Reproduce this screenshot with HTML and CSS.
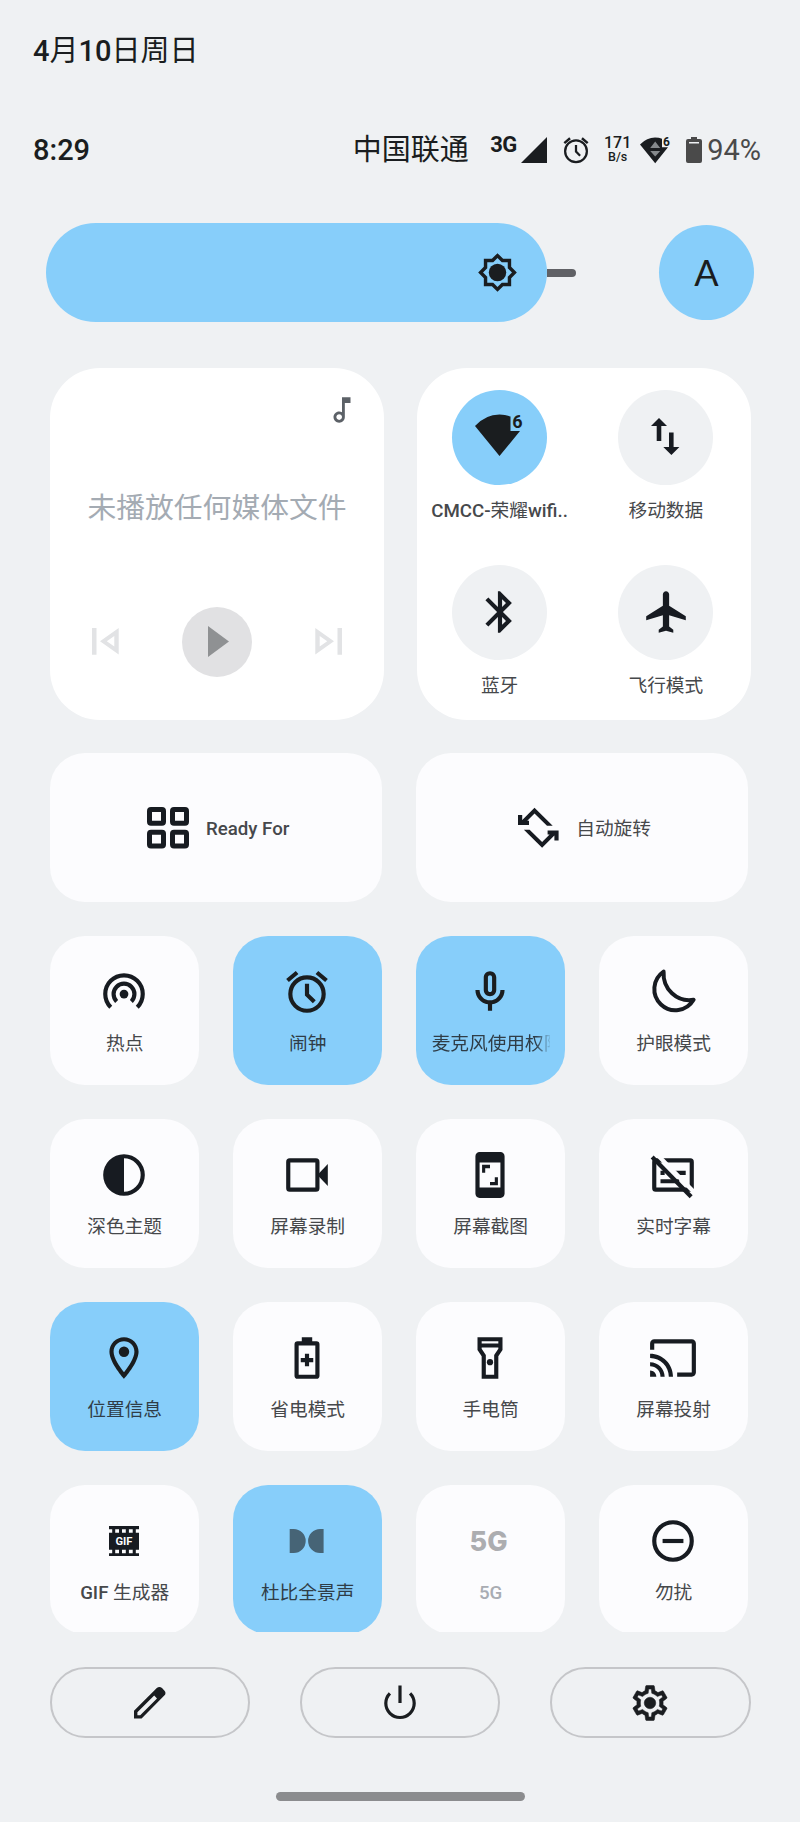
FILE: index.html
```html
<!DOCTYPE html>
<html lang="zh-CN">
<head>
<meta charset="utf-8">
<title>快捷设置</title>
<link rel="stylesheet" href="styles.css">
</head>
<body>
<main class="shade">
  <div class="date"><b>4</b>月<b>10</b>日周日</div>

  <header class="status">
    <span class="clock">8:29</span>
    <div class="status-right">
      <span class="carrier">中国联通</span>
      <span class="network">3G</span>
      <svg class="signal" width="26" height="26" viewBox="0 0 26 26"><path d="M26 0v26H0z"/></svg>
      <svg class="status-alarm" width="30" height="30" viewBox="0 0 24 24"><path d="M22 5.72l-4.6-3.86-1.29 1.53 4.6 3.86zM7.88 3.39L6.6 1.86 2 5.71l1.29 1.53z"/><circle cx="12" cy="13" r="8.7" fill="none" stroke="currentColor" stroke-width="1.8"/><path d="M12 8v5.3l3.3 3.3" fill="none" stroke="currentColor" stroke-width="1.8"/></svg>
      <span class="speed"><b>171</b><i>B/s</i></span>
      <svg class="status-wifi" width="32" height="27" viewBox="0 0 32 27"><path d="M0 7.5Q7 .6 15 .6q4 0 7 1.2v8.400h6L15.200 26.300z"/><path class="wifi-arrow" d="M15.200 4.600l5 6.400h-10zM15.200 19.600l-5-5.600h10z"/><text x="23" y="9" font-size="12">6</text></svg>
      <svg class="battery" width="16" height="26" viewBox="0 0 16 26"><path fill-rule="evenodd" d="M5 0h6v2h3q2 0 2 2v20q0 2-2 2H2q-2 0-2-2V4q0-2 2-2h3zM3 5v1.500h10V5z"/></svg>
      <span class="percent">94%</span>
    </div>
  </header>

  <section class="brightness">
    <div class="slider">
      <div class="slider-fill">
        <svg width="41" height="41" viewBox="0 0 24 24"><path fill-rule="evenodd" d="M20 8.690V4h-4.690L12 .69 8.690 4H4v4.690L.69 12 4 15.310V20h4.690L12 23.310 15.310 20H20v-4.690L23.310 12 20 8.690zm-2 5.790V18h-3.520L12 20.480 9.520 18H6v-3.520L3.520 12 6 9.520V6h3.520L12 3.520 14.480 6H18v3.520L20.480 12 18 14.480z"/><circle cx="12" cy="12" r="5.100"/></svg>
      </div>
      <div class="slider-track"></div>
    </div>
    <div class="auto">A</div>
  </section>

  <section class="cards">
    <div class="card media">
      <svg class="note" width="34" height="34" viewBox="0 0 24 24"><path d="M12 3l.01 10.550c-.59-.34-1.270-.55-2-.55C7.790 13 6 14.790 6 17s1.790 4 4.010 4S14 19.210 14 17V7h4V3h-6zm-1.990 16c-1.100 0-2-.9-2-2s.9-2 2-2 2 .9 2 2-.9 2-2 2z"/></svg>
      <div class="media-title">未播放任何媒体文件</div>
      <div class="controls">
        <svg width="27" height="27" viewBox="0 0 27 27"><path fill-rule="evenodd" d="M0 0h4.500v26.700H0zM8 13.300L26.700 0v26.600zM14.800 13.300l7.500 5.200V8.100z"/></svg>
        <div class="play"><svg width="21" height="31" viewBox="0 0 21 31"><path d="M0 0l21 15.500L0 31z"/></svg></div>
        <svg width="27" height="27" viewBox="0 0 27 27"><path fill-rule="evenodd" d="M22.500 0H27v26.700h-4.500zM19 13.300L.3 0v26.600zM12.200 13.300l-7.500 5.200V8.100z"/></svg>
      </div>
    </div>
    <div class="card links">
      <div class="link">
        <span class="disc on"><svg width="50" height="50" viewBox="0 0 50 50"><path d="M0 14Q10.500 2.500 24.500 2.500q6 0 11 2V19H45L24.500 44z"/><text x="37.300" y="16" font-size="18">6</text></svg></span>
        <span class="label"><b>CMCC-</b>荣耀<b>wifi..</b></span>
      </div>
      <div class="link">
        <span class="disc"><svg width="50" height="50" viewBox="0 0 50 50"><path d="M18 6l8 8h-5.700v15h-4.600V14H10zM30.400 43l8-8h-5.800V20.500H28V35h-5.700z"/></svg></span>
        <span class="label">移动数据</span>
      </div>
      <div class="link">
        <span class="disc"><svg width="50" height="50" viewBox="0 0 24 24"><path d="M17.710 7.710L12 2h-1v7.590L6.410 5 5 6.410 10.590 12 5 17.590 6.410 19 11 14.410V22h1l5.710-5.710-4.300-4.290 4.300-4.290zM13 5.830l1.880 1.880L13 9.590V5.830zm1.880 10.460L13 18.170v-3.760l1.880 1.880z"/></svg></span>
        <span class="label">蓝牙</span>
      </div>
      <div class="link">
        <span class="disc"><svg width="50" height="50" viewBox="0 0 24 24"><path d="M21.500 16v-2l-8-5V3.500c0-.83-.67-1.500-1.500-1.500s-1.500.67-1.500 1.500V9l-8 5v2l8-2.500V19l-2 1.500V22l3.500-1 3.500 1v-1.500l-2-1.500v-5.500z"/></svg></span>
        <span class="label">飞行模式</span>
      </div>
    </div>
  </section>

  <section class="tiles">
    <div class="tile wide">
      <svg class="icon" viewBox="0 0 50 50"><g fill="none" stroke="currentColor" stroke-width="5"><rect x="6.500" y="6.500" width="14" height="13.700" rx="1.500"/><rect x="29.500" y="6.500" width="14" height="13.700" rx="1.500"/><rect x="6.500" y="29.200" width="14" height="13.700" rx="1.500"/><rect x="29.500" y="29.200" width="14" height="13.700" rx="1.500"/></g></svg>
      <span class="label"><b>Ready For</b></span>
    </div>
    <div class="tile wide">
      <svg class="icon" viewBox="0 0 50 50"><path d="M21.500 4.700l18.200 18H34L21.500 10.400 10 22l-3-2.800zM5 12h4.200v5.800H16V22H5z"/><g transform="rotate(180 25.300 24.700)"><path d="M21.500 4.700l18.200 18H34L21.500 10.400 10 22l-3-2.800zM5 12h4.200v5.800H16V22H5z"/></g></svg>
      <span class="label">自动旋转</span>
    </div>

    <div class="tile">
      <svg class="icon" viewBox="0 0 24 24"><circle cx="12" cy="13" r="2.100"/><g fill="none" stroke="currentColor" stroke-width="2"><path d="M8.460 16.540a5 5 0 1 1 7.080 0"/><path d="M5.640 19.360a9 9 0 1 1 12.720 0"/></g></svg>
      <span class="label">热点</span>
    </div>
    <div class="tile on">
      <svg class="icon" viewBox="0 0 24 24"><path d="M22 5.720l-4.600-3.860-1.290 1.530 4.600 3.860zM7.880 3.390L6.600 1.860 2 5.710l1.290 1.530z"/><circle cx="12" cy="13" r="8" fill="none" stroke="currentColor" stroke-width="2"/><path d="M12 8v5.300l3.500 3.400" fill="none" stroke="currentColor" stroke-width="2"/></svg>
      <span class="label">闹钟</span>
    </div>
    <div class="tile on">
      <svg class="icon" viewBox="0 0 24 24"><path d="M12 14c1.660 0 3-1.340 3-3V5c0-1.660-1.340-3-3-3S9 3.340 9 5v6c0 1.660 1.340 3 3 3zm-1-9c0-.55.45-1 1-1s1 .45 1 1v6c0 .55-.45 1-1 1s-1-.45-1-1V5zm6 6c0 2.760-2.240 5-5 5s-5-2.240-5-5H5c0 3.530 2.610 6.430 6 6.920V21h2v-3.080c3.390-.49 6-3.390 6-6.920h-2z"/></svg>
      <span class="label fade">麦克风使用权限</span>
    </div>
    <div class="tile">
      <svg class="icon" viewBox="0 0 50 50"><path d="M15.600 4.600A21.100 21.100 0 1 0 45.600 32.800C29 35.500 14.500 22 15.600 4.600z" fill="none" stroke="currentColor" stroke-width="4" stroke-linejoin="round"/></svg>
      <span class="label">护眼模式</span>
    </div>

    <div class="tile">
      <svg class="icon" viewBox="0 0 24 24"><path fill-rule="evenodd" d="M12 2a10 10 0 1 0 0 20 10 10 0 0 0 0-20zm0 2a8 8 0 0 1 0 16z"/></svg>
      <span class="label">深色主题</span>
    </div>
    <div class="tile">
      <svg class="icon" viewBox="0 0 24 24"><rect x="3" y="5" width="14" height="14" rx=".7" fill="none" stroke="currentColor" stroke-width="2"/><path d="M22 6.700v10.600L17 12z"/></svg>
      <span class="label">屏幕录制</span>
    </div>
    <div class="tile">
      <svg class="icon" viewBox="0 0 24 24"><path fill-rule="evenodd" d="M7 1h10c1.100 0 2 .9 2 2v18c0 1.100-.9 2-2 2H7c-1.100 0-2-.9-2-2V3c0-1.100.9-2 2-2zM7 6v12h10V6z"/><path d="M9.700 8.700H12V7.100H8.200v3.800h1.500zM12 16.900h3.800v-3.800h-1.500v2.300H12z"/></svg>
      <span class="label">屏幕截图</span>
    </div>
    <div class="tile">
      <svg class="icon" viewBox="0 0 24 24"><rect x="3" y="5" width="18" height="14" rx=".7" fill="none" stroke="currentColor" stroke-width="2"/><path d="M6 10h2v2H6zM12.500 10h5.600v2h-5.600zM6 14h9v2H6z"/><path class="gap" d="M3.400 1.200l19.600 19.900"/><path d="M2 3.400l18.700 19" fill="none" stroke="currentColor" stroke-width="2"/></svg>
      <span class="label">实时字幕</span>
    </div>

    <div class="tile on">
      <svg class="icon" viewBox="0 0 24 24"><path d="M12 2C8.130 2 5 5.130 5 9c0 5.250 7 13 7 13s7-7.750 7-13c0-3.870-3.130-7-7-7zM7 9c0-2.760 2.240-5 5-5s5 2.240 5 5c0 2.880-2.880 7.190-5 9.880C9.920 16.210 7 11.850 7 9z"/><circle cx="12" cy="9" r="2.500"/></svg>
      <span class="label">位置信息</span>
    </div>
    <div class="tile">
      <svg class="icon" viewBox="0 0 24 24"><rect x="7" y="5" width="10" height="16" rx=".5" fill="none" stroke="currentColor" stroke-width="2"/><path d="M9.500 2h5v3h-5zM11 10h2v2h2v2h-2v2h-2v-2H9v-2h2z"/></svg>
      <span class="label">省电模式</span>
    </div>
    <div class="tile">
      <svg class="icon" viewBox="0 0 24 24"><path fill-rule="evenodd" d="M6 2h12v6.200l-2 3V22H8V11.200l-2-3zM8 4v1h8V4zM8 7v.5l2 3V20h4v-9.500l2-3V7z"/><circle cx="12" cy="14" r="1.500"/></svg>
      <span class="label">手电筒</span>
    </div>
    <div class="tile">
      <svg class="icon" viewBox="0 0 24 24"><path d="M21 3H3c-1.100 0-2 .9-2 2v3h2V5h18v14h-7v2h7c1.100 0 2-.9 2-2V5c0-1.100-.9-2-2-2zM1 18v3h3c0-1.660-1.340-3-3-3zm0-4v2c2.760 0 5 2.240 5 5h2c0-3.870-3.130-7-7-7zm0-4v2c4.970 0 9 4.030 9 9h2c0-6.080-4.930-11-11-11z"/></svg>
      <span class="label">屏幕投射</span>
    </div>

    <div class="tile">
      <svg class="icon" viewBox="0 0 50 50"><path fill-rule="evenodd" d="M10 10h30v3.300h-3.200v3.500H40v17h-3.200v3.400H40V40H10v-2.800h3.200v-3.400H10v-17h3.200v-3.500H10zM16.200 13.300v3.500h3.800v-3.500zM23 13.300v3.500h3.800v-3.500zM29.900 13.300v3.500h3.800v-3.500zM16.200 33.800v3.400h3.800v-3.400zM23 33.800v3.400h3.800v-3.400zM29.900 33.800v3.400h3.800v-3.400z"/><text class="gif" x="25" y="29.300" text-anchor="middle" textLength="17" lengthAdjust="spacingAndGlyphs">GIF</text></svg>
      <span class="label"><b>GIF</b> 生成器</span>
    </div>
    <div class="tile on">
      <svg class="icon dolby" viewBox="0 0 50 50"><path d="M7.700 13h4a12 12 0 0 1 0 24h-4zM41.600 13h-3.500a12 12 0 0 0 0 24h3.500z"/></svg>
      <span class="label">杜比全景声</span>
    </div>
    <div class="tile off">
      <svg class="icon" viewBox="0 0 50 50"><text class="fiveg" x="4.500" y="35" textLength="38" lengthAdjust="spacingAndGlyphs">5G</text></svg>
      <span class="label"><b>5G</b></span>
    </div>
    <div class="tile">
      <svg class="icon" viewBox="0 0 24 24"><circle cx="12" cy="12" r="9" fill="none" stroke="currentColor" stroke-width="2"/><path d="M7 11h10v2H7z"/></svg>
      <span class="label">勿扰</span>
    </div>
  </section>

  <footer class="actions">
    <div class="pill"><svg width="32" height="32" viewBox="0 0 32 32"><path fill-rule="evenodd" d="M0 31.500v-7.700L22.800 1.100q2.600-2.200 5.200 0l2.300 2.300q2.400 2.600 0 5.200L7.600 31.500zM3.400 28.200h2.800L23 11.400l-2.800-2.900L3.400 25.300z"/></svg></div>
    <div class="pill"><svg width="36" height="36" viewBox="0 0 36 36"><path d="M7.900 8.300a14.200 14.200 0 1 0 20.200 0M18 .5V18" fill="none" stroke="currentColor" stroke-width="3.200"/></svg></div>
    <div class="pill"><svg class="gear" width="42" height="42" viewBox="0 0 24 24"><path d="M19.430 12.980c.04-.32.07-.64.07-.98 0-.34-.03-.66-.07-.98l2.110-1.650c.19-.15.24-.42.12-.64l-2-3.460c-.09-.16-.26-.25-.44-.25-.06 0-.12.01-.17.03l-2.490 1c-.52-.4-1.080-.73-1.690-.98l-.38-2.650C14.460 2.180 14.250 2 14 2h-4c-.25 0-.46.18-.49.42l-.38 2.650c-.61.25-1.170.59-1.690.98l-2.490-1c-.06-.02-.12-.03-.18-.03-.17 0-.34.09-.43.25l-2 3.460c-.13.22-.07.49.12.64l2.110 1.650c-.04.32-.07.65-.07.98 0 .33.03.66.07.98l-2.110 1.650c-.19.15-.24.42-.12.64l2 3.460c.09.16.26.25.44.25.06 0 .12-.01.17-.03l2.490-1c.52.4 1.080.73 1.690.98l.38 2.650c.03.24.24.42.49.42h4c.25 0 .46-.18.49-.42l.38-2.650c.61-.25 1.170-.59 1.690-.98l2.490 1c.06.02.12.03.18.03.17 0 .34-.09.43-.25l2-3.460c.12-.22.07-.49-.12-.64l-2.110-1.650zm-1.980-1.710c.04.31.05.52.05.73 0 .21-.02.43-.05.73l-.14 1.130.89.7 1.080.84-.7 1.210-1.270-.51-1.040-.42-.9.68c-.43.32-.84.56-1.250.73l-1.060.43-.16 1.130-.2 1.350h-1.400l-.19-1.350-.16-1.130-1.060-.43c-.43-.18-.83-.41-1.230-.71l-.91-.7-1.060.43-1.270.51-.7-1.210 1.080-.84.89-.7-.14-1.130c-.03-.31-.05-.54-.05-.74s.02-.43.05-.73l.14-1.130-.89-.7-1.080-.84.7-1.210 1.270.51 1.040.42.9-.68c.43-.32.84-.56 1.250-.73l1.060-.43.16-1.130.2-1.350h1.390l.19 1.350.16 1.130 1.060.43c.43.18.83.41 1.230.71l.91.7 1.060-.43 1.270-.51.7 1.210-1.070.85-.89.7.14 1.130z"/><circle cx="12" cy="12" r="3.300"/></svg></div>
  </footer>
  <div class="home-bar"></div>
</main>
</body>
</html>
```

FILE: styles.css
```css
* { box-sizing: border-box; }

body {
  margin: 0;
  background: #eff1f3;
  color: #1a1d20;
  font-family: Roboto, "Noto Sans CJK SC", sans-serif;
  font-weight: 400;
}

b { font-weight: 500; }

svg {
  display: block;
  flex: none;
  fill: currentColor;
  overflow: visible;
}

svg text {
  font-family: Roboto, sans-serif;
  font-weight: 700;
}

.shade {
  width: 800px;
  height: 1822px;
  display: flex;
  flex-direction: column;
  overflow: hidden;
}

.date {
  margin: 31px 0 0 33px;
  height: 40px;
  font-size: 29px;
  line-height: 40px;
}

.status {
  margin: 59px 39px 0 33px;
  height: 40px;
  display: flex;
  align-items: center;
  justify-content: space-between;
  font-size: 29px;
  line-height: 40px;
}

.clock { font-weight: 500; }

.status-right {
  display: flex;
  align-items: center;
}

.carrier { margin-right: 21.5px; }

.network {
  width: 31px;
  font-size: 22px;
  font-weight: 700;
  line-height: 26px;
  padding-bottom: 10px;
  letter-spacing: -0.5px;
}

.status-alarm { margin: 0 14px; }

.speed {
  width: 25px;
  display: flex;
  flex-direction: column;
  align-items: center;
  font-weight: 500;
  line-height: 14px;
}

.speed b { font-size: 16px; }
.speed i { font-size: 12.5px; font-style: normal; }

.status-wifi { margin-left: 10px; }
.wifi-arrow { fill: #85898c; }

.battery {
  margin-left: 14px;
  color: #4a4a4a;
}

.percent {
  margin-left: 5px;
  color: #4a4a4a;
}

.brightness {
  margin: 53px 46px 0;
  height: 99px;
  display: flex;
  align-items: center;
  justify-content: space-between;
}

.slider {
  display: flex;
  align-items: center;
}

.slider-fill {
  width: 501px;
  height: 99px;
  padding-right: 29px;
  border-radius: 50px;
  background: #87cefa;
  display: flex;
  align-items: center;
  justify-content: flex-end;
}

.slider-track {
  width: 29px;
  height: 8px;
  border-radius: 0 4px 4px 0;
  background: #606165;
}

.auto {
  width: 95px;
  height: 95px;
  border-radius: 50%;
  background: #87cefa;
  font: 400 36px/95px Lato, sans-serif;
  text-align: center;
}

.cards {
  margin: 46px 49.5px 0 50px;
  height: 352px;
  display: flex;
  justify-content: space-between;
}

.card {
  width: 334px;
  height: 352px;
  border-radius: 50px;
  background: #fff;
}

.media {
  display: flex;
  flex-direction: column;
  align-items: center;
}

.note {
  align-self: flex-end;
  margin: 24.5px 25px 0 0;
  color: #5c6167;
}

.media-title {
  margin-top: 61px;
  color: #a4abb3;
  font-size: 28.8px;
  line-height: 40px;
}

.controls {
  width: 250px;
  margin-top: 79px;
  display: flex;
  align-items: center;
  justify-content: space-between;
  color: #e2e3e5;
}

.play {
  width: 70px;
  height: 70px;
  padding-left: 3px;
  border-radius: 50%;
  background: #e1e1e3;
  color: #8f9193;
  display: flex;
  align-items: center;
  justify-content: center;
}

.links {
  padding: 21.5px 1.5px 0 0;
  display: grid;
  grid-template-columns: 1fr 1fr;
  grid-template-rows: 175px 155px;
}

.link {
  display: flex;
  flex-direction: column;
  align-items: center;
}

.disc {
  width: 95px;
  height: 95px;
  border-radius: 50%;
  background: #eff1f3;
  color: #171b21;
  display: flex;
  align-items: center;
  justify-content: center;
}

.disc.on { background: #87cefa; color: #1a1d1f; }

.link .label { margin-top: 12.5px; }

.label {
  color: #46484b;
  font-size: 18.7px;
  line-height: 28px;
  white-space: nowrap;
}

.tiles {
  margin: 33px 50px 0;
  height: 878.5px;
  display: grid;
  grid-template-columns: repeat(4, 149.33px);
  grid-auto-rows: 149.33px;
  gap: 33.67px;
  overflow: hidden;
}

.tile {
  padding-top: 31px;
  border-radius: 35px;
  background: #fcfcfe;
  color: #171b21;
  display: flex;
  flex-direction: column;
  align-items: center;
}

.tile.wide {
  grid-column: span 2;
  padding: 0;
  flex-direction: row;
  justify-content: center;
  gap: 13px;
}

.tile.wide .label { padding-top: 3px; }

.tile.on { background: #87cefa; color: #1a1d1f; }
.tile.on .label { color: #2f3d47; }
.tile.off { color: #acadb0; }
.tile.off .label { color: #a9acb3; }

.icon { width: 50px; height: 50px; }
.icon.dolby { color: #466476; }

.tile:not(.wide) .icon { margin-right: 1.3px; }
.tile:not(.wide) .label { margin-top: 13px; }

.label.fade {
  width: 118px;
  overflow: hidden;
  -webkit-mask-image: linear-gradient(to right, #000 104px, transparent 120px);
  mask-image: linear-gradient(to right, #000 104px, transparent 120px);
}

.gap {
  fill: none;
  stroke: #fcfcfe;
  stroke-width: 2;
}

svg .gif { fill: #fcfcfe; font-size: 11px; }

svg .fiveg {
  font-family: Inter, sans-serif;
  font-size: 27px;
  font-weight: 800;
}

.actions {
  margin: 35.5px 49.5px 0;
  display: flex;
  justify-content: space-between;
}

.pill {
  width: 200.5px;
  height: 71px;
  border: 2px solid #c5c6c9;
  border-radius: 36px;
  display: flex;
  align-items: center;
  justify-content: center;
}

.gear {
  stroke: currentColor;
  stroke-width: 0.3;
}

.home-bar {
  width: 249px;
  height: 9px;
  margin: 54px auto 0;
  border-radius: 5px;
  background: #8b8c8e;
}
```
